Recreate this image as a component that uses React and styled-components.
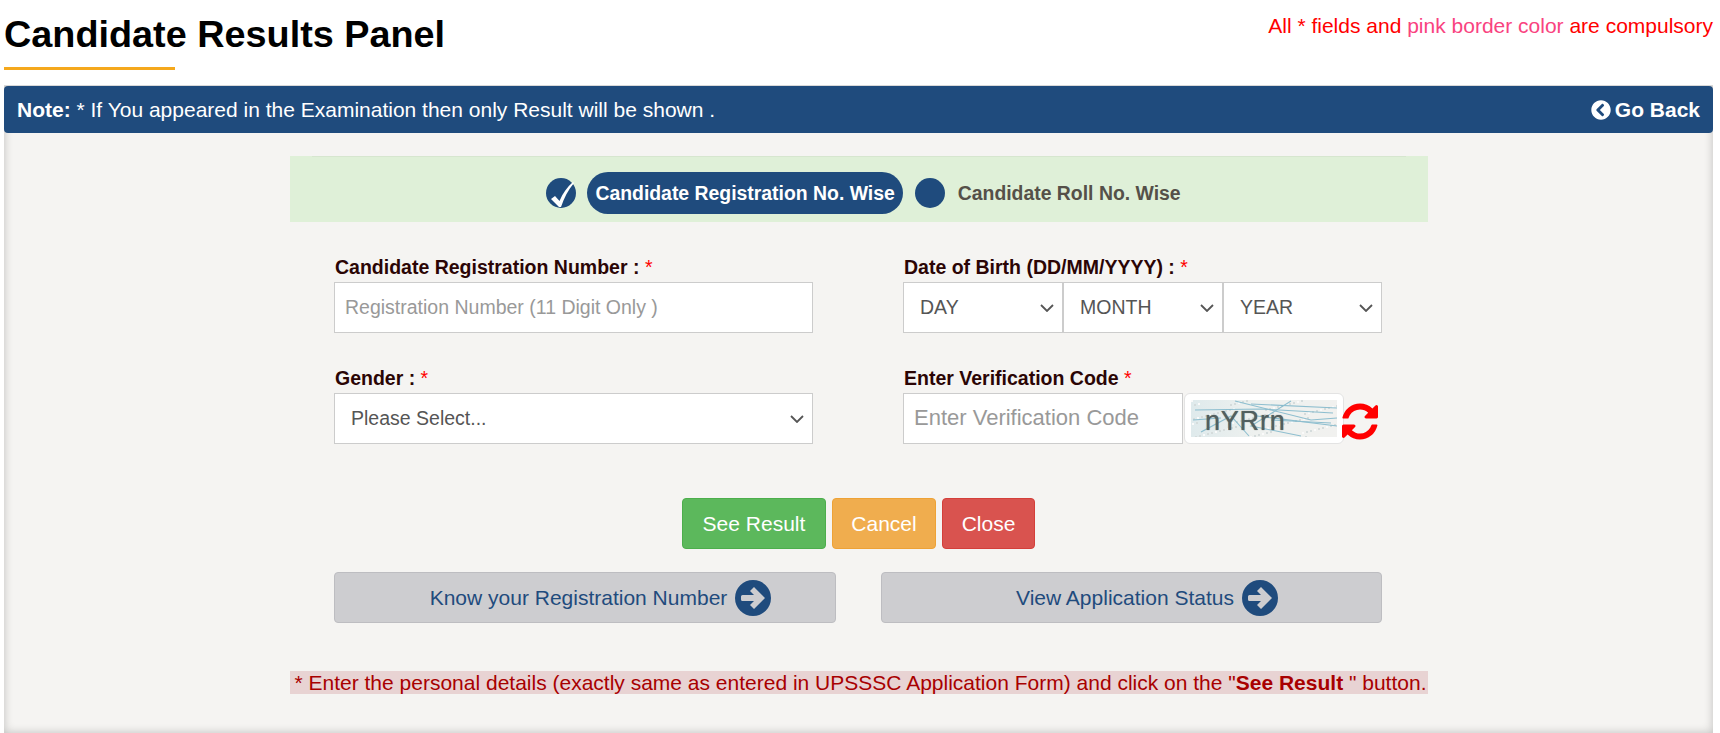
import React from "react";
import styled, { createGlobalStyle } from "styled-components";
import { FaChevronCircleLeft } from "react-icons/fa";

const GlobalStyle = createGlobalStyle`
  html, body {
    margin: 0;
    padding: 0;
    background: #fff;
    font-family: "Liberation Sans", Arial, sans-serif;
    overflow: hidden;
  }
  * { box-sizing: border-box; }
`;

const chevron =
  "url(\"data:image/svg+xml,%3Csvg xmlns='http://www.w3.org/2000/svg' width='14' height='8' viewBox='0 0 14 8'%3E%3Cpath d='M1 1l6 6 6-6' fill='none' stroke='%23555' stroke-width='1.8'/%3E%3C/svg%3E\")";

const Page = styled.div`
  width: 1720px;
  height: 733px;
  padding: 0 7px 0 4px;
  overflow: hidden;
`;

const TopBar = styled.div`
  display: flex;
  justify-content: space-between;
  align-items: flex-start;
  height: 85px;
`;

const TitleBlock = styled.div`
  padding-top: 13px;
`;

const Title = styled.h1`
  margin: 0;
  font-size: 37.8px;
  line-height: 42px;
  font-weight: 700;
  color: #000;
`;

const TitleRule = styled.div`
  width: 171px;
  height: 3px;
  margin-top: 12px;
  background: #f5a81c;
`;

const Compulsory = styled.div`
  padding-top: 15px;
  font-size: 21px;
  line-height: 22px;
  color: #ff0000;
`;

const Pink = styled.span`
  color: #f9437f;
`;

const Panel = styled.div`
  height: 648px;
  background: #f5f4f2;
  border-top: 1px solid #d9d9d9;
  box-shadow: inset 0 0 10px rgba(0, 0, 0, 0.22);
`;

const PanelHead = styled.div`
  display: flex;
  justify-content: space-between;
  align-items: center;
  height: 47px;
  padding: 0 13px;
  background: #1f4b7d;
  border-radius: 4px;
  color: #fff;
  font-size: 21px;
`;

const BackLink = styled.a`
  display: flex;
  align-items: center;
  gap: 4px;
  font-weight: 700;
  font-size: 21px;
  color: #fff;
  svg { width: 20px; height: 20px; }
`;

const TabBand = styled.div`
  width: 1138px;
  margin: 23px auto 0;
  padding: 0 22px;
  background: #dff0d8;
`;

const Tabs = styled.div`
  display: flex;
  align-items: center;
  justify-content: center;
  height: 66px;
  padding: 7px 0 0 10px;
  border-top: 1px solid #d6e6cf;
`;

const RadioDot = styled.span`
  display: block;
  width: 30px;
  height: 30px;
  border-radius: 50%;
  background: #1f4b7d;
  margin-right: ${(p) => p.$gap}px;
  svg { display: block; }
`;

const ActivePill = styled.span`
  display: block;
  height: 42px;
  line-height: 42px;
  padding: 0 8px;
  margin-right: 12px;
  border-radius: 21px;
  background: #1f4b7d;
  color: #fff;
  font-size: 19.4px;
  font-weight: 700;
`;

const TabLabel = styled.span`
  color: #555049;
  font-size: 19.4px;
  font-weight: 700;
`;

const FormGrid = styled.div`
  display: grid;
  grid-template-columns: 479px 479px;
  column-gap: 90px;
  row-gap: 34px;
  justify-content: center;
  margin-top: 34px;
  padding-right: 1px;
`;

const Field = styled.div`
  min-width: 0;
`;

const Label = styled.div`
  height: 26px;
  line-height: 22px;
  padding-left: 1px;
  font-size: 19.5px;
  font-weight: 700;
  color: #2b0505;
`;

const Star = styled.span`
  font-weight: 400;
  color: #ff0000;
`;

const Input = styled.input`
  display: block;
  width: ${(p) => p.$width || "100%"};
  height: 51px;
  padding: 0 10px ${(p) => (p.$size ? 2 : 0)}px;
  border: 1px solid #ccc;
  border-radius: 0;
  background: #fff;
  font-family: inherit;
  font-size: ${(p) => p.$size || 19.5}px;
  outline: none;
  &::placeholder { color: #999; opacity: 1; }
`;

const Select = styled.select`
  display: block;
  width: 100%;
  min-width: 0;
  height: 51px;
  padding: 0 26px 2px 16px;
  border: 1px solid #ccc;
  border-radius: 0;
  appearance: none;
  background: #fff ${chevron} no-repeat right 8px center;
  font-family: inherit;
  font-size: 19.5px;
  color: #555;
  outline: none;
`;

const DateRow = styled.div`
  display: grid;
  grid-template-columns: 160px 160px 159px;
`;

const CaptchaRow = styled.div`
  display: flex;
  align-items: center;
`;

const CaptchaBox = styled.div`
  flex: none;
  width: 160px;
  height: 51px;
  margin-left: 1px;
  padding: 6px;
  background: #fff;
  border: 1px solid #e3e3e3;
  border-radius: 6px;
`;

const CaptchaImage = styled.div`
  position: relative;
  height: 37px;
  background: linear-gradient(90deg, #dfeaec 0%, #eef1ef 45%, #f1f1ef 100%);
  overflow: hidden;
  svg { position: absolute; inset: 0; }
`;

const CaptchaText = styled.span`
  position: absolute;
  left: 14px;
  top: 7px;
  font-size: 27px;
  line-height: 28px;
  letter-spacing: 0.8px;
  color: #525f5f;
  text-shadow: 0 0 1px #525f5f;
`;

const RefreshIcon = styled.svg`
  flex: none;
  display: block;
  width: 36px;
  height: 37px;
  margin: 5px 0 0 -2px;
  fill: #ff0000;
`;

const Actions = styled.div`
  display: flex;
  justify-content: center;
  gap: 6px;
  margin-top: 54px;
`;

const ActionButton = styled.button`
  height: 51px;
  padding: 0 ${(p) => p.$pad}px;
  border: 1px solid ${(p) => p.$border};
  border-radius: 4px;
  background: ${(p) => p.$bg};
  color: #fff;
  font-family: inherit;
  font-size: 21px;
`;

const LinkRow = styled.div`
  display: grid;
  grid-template-columns: 502px 501px;
  column-gap: 45px;
  justify-content: center;
  margin-top: 23px;
  padding-right: 1px;
`;

const LinkButton = styled.a`
  display: flex;
  align-items: center;
  justify-content: center;
  gap: 8px;
  height: 51px;
  padding-left: 31px;
  border: 1px solid #bdbdc1;
  border-radius: 4px;
  background: #cdcdd0;
  color: #1f4b7d;
  font-size: 21px;
`;

const ArrowIcon = styled.svg`
  display: block;
  width: 36px;
  height: 36px;
  fill: #1f4b7d;
  fill-rule: evenodd;
`;

const Hint = styled.div`
  width: 1138px;
  margin: 48px auto 0;
  background: #e8d3d3;
  color: #a80000;
  font-size: 21px;
  line-height: 23px;
  padding-left: 5px;
  white-space: nowrap;
`;

// scattered specks and scratches behind the verification code
const specks = Array.from({ length: 90 }, (_, i) => ({
  x: (i * 37) % 146,
  y: (i * 23) % 37,
}));

const CaptchaNoise = () => (
  <svg width="146" height="37" viewBox="0 0 146 37" fill="none">
    {specks.map((s, i) => (
      <rect key={i} x={s.x} y={s.y} width="2" height="2" fill={i % 3 ? "#d5dcdc" : "#fafafa"} />
    ))}
    <g stroke="#7db6ca" strokeWidth="1.1" opacity="0.85">
      <path d="M4 10 L70 9 L142 13" />
      <path d="M44 1 L120 20 L146 18" />
      <path d="M66 16 L146 26" />
      <path d="M100 1 L60 26 L110 36" />
      <path d="M10 32 L40 16 L58 36" />
      <path d="M2 20 L30 18" />
      <path d="M80 20 L140 23" />
      <path d="M60 4 L146 8" />
    </g>
  </svg>
);

const CheckMark = () => (
  <svg width="30" height="30" viewBox="0 0 30 30">
    <path d="M5 21 L9 18 L13.5 23 C17 15 21 9 27 4 L28 5 C22 12 18 20 15 29 L13 29 Z" fill="#fff" />
  </svg>
);

const Arrow = () => (
  <ArrowIcon viewBox="0 0 36 36">
    <path d="M18 0a18 18 0 1 0 0 36a18 18 0 1 0 0-36zM30 18L19 7L15 11L19 15H7.500Q6 15 6 16.500V19.500Q6 21 7.500 21H19L15 25L19 29Z" />
  </ArrowIcon>
);

export default function App() {
  return (
    <Page>
      <GlobalStyle />
      <TopBar>
        <TitleBlock>
          <Title>Candidate Results Panel</Title>
          <TitleRule />
        </TitleBlock>
        <Compulsory>
          All * fields and <Pink>pink border color</Pink> are compulsory
        </Compulsory>
      </TopBar>
      <Panel>
        <PanelHead>
          <span>
            <b>Note:</b> * If You appeared in the Examination then only Result will be shown .
          </span>
          <BackLink>
            <FaChevronCircleLeft />
            Go Back
          </BackLink>
        </PanelHead>
        <TabBand>
          <Tabs>
            <RadioDot $gap={11}>
              <CheckMark />
            </RadioDot>
            <ActivePill>Candidate Registration No. Wise</ActivePill>
            <RadioDot $gap={13} />
            <TabLabel>Candidate Roll No. Wise</TabLabel>
          </Tabs>
        </TabBand>
        <FormGrid>
          <Field>
            <Label>
              Candidate Registration Number : <Star>*</Star>
            </Label>
            <Input placeholder="Registration Number (11 Digit Only )" />
          </Field>
          <Field>
            <Label>
              Date of Birth (DD/MM/YYYY) : <Star>*</Star>
            </Label>
            <DateRow>
              <Select>
                <option>DAY</option>
              </Select>
              <Select>
                <option>MONTH</option>
              </Select>
              <Select>
                <option>YEAR</option>
              </Select>
            </DateRow>
          </Field>
          <Field>
            <Label>
              Gender : <Star>*</Star>
            </Label>
            <Select>
              <option>Please Select...</option>
            </Select>
          </Field>
          <Field>
            <Label>
              Enter Verification Code <Star>*</Star>
            </Label>
            <CaptchaRow>
              <Input $width="280px" $size={22} placeholder="Enter Verification Code" />
              <CaptchaBox>
                <CaptchaImage>
                  <CaptchaNoise />
                  <CaptchaText>nYRrn</CaptchaText>
                </CaptchaImage>
              </CaptchaBox>
              <RefreshIcon viewBox="128 128 1536 1536">
                <path d="M1639 1056q0 5-1 7-64 268-268 434.500t-478 166.500q-146 0-282.500-55t-243.500-157l-129 129q-19 19-45 19t-45-19-19-45v-448q0-26 19-45t45-19h448q26 0 45 19t19 45-19 45l-137 137q71 66 161 102t187 36q134 0 250-65t186-179q11-17 53-117 8-23 30-23h192q13 0 22.500 9.500t9.500 22.500zm25-800v448q0 26-19 45t-45 19h-448q-26 0-45-19t-19-45 19-45l138-138q-148-137-349-137-134 0-250 65t-186 179q-11 17-53 117-8 23-30 23h-199q-13 0-22.500-9.500t-9.500-22.500v-7q65-268 270-434.500t480-166.500q146 0 284 55.500t245 156.500l130-129q19-19 45-19t45 19 19 45z" />
              </RefreshIcon>
            </CaptchaRow>
          </Field>
        </FormGrid>
        <Actions>
          <ActionButton $pad={20} $bg="#5cb85c" $border="#4cae4c">See Result</ActionButton>
          <ActionButton $pad={18} $bg="#f0ad4e" $border="#eea236">Cancel</ActionButton>
          <ActionButton $pad={19} $bg="#d9534f" $border="#d43f3a">Close</ActionButton>
        </Actions>
        <LinkRow>
          <LinkButton>
            Know your Registration Number
            <Arrow />
          </LinkButton>
          <LinkButton>
            View Application Status
            <Arrow />
          </LinkButton>
        </LinkRow>
        <Hint>
          * Enter the personal details (exactly same as entered in UPSSSC Application Form) and click on the "<b>See Result</b> " button.
        </Hint>
      </Panel>
    </Page>
  );
}
